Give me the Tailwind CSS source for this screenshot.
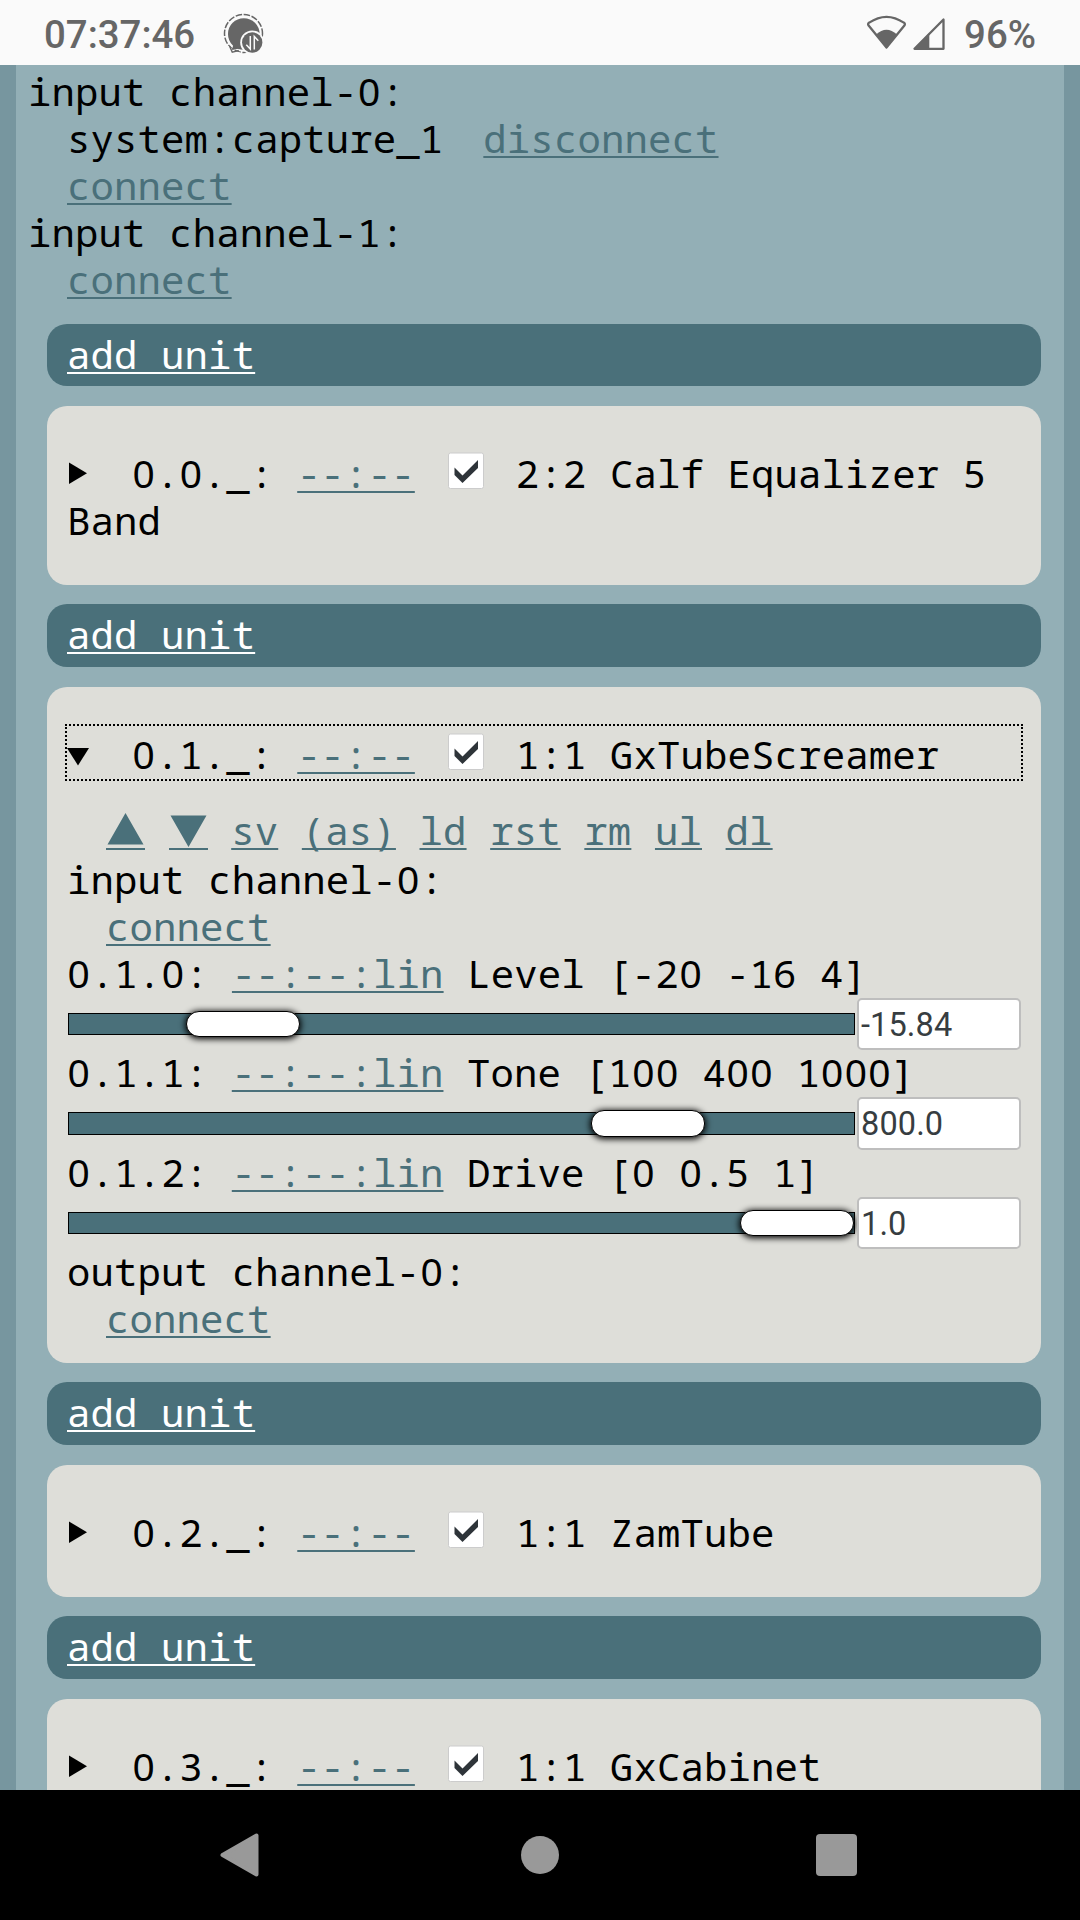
<!DOCTYPE html>
<html lang="en">
<head>
<meta charset="utf-8">
<title>Units</title>
<script src="https://cdn.jsdelivr.net/npm/@tailwindcss/browser@4"></script>
</head>
<body class="w-[1080px] h-[1920px] overflow-hidden flex flex-col bg-black [&_a]:text-[#4a707a] [&_a]:underline [&_a]:decoration-2 [&_a]:underline-offset-[3px] [&_a]:[text-decoration-skip-ink:none] [&_b]:font-normal [&_b]:font-['Noto_Sans'] [&_b]:mx-[0.62px]">

<!-- status bar -->
<header class="h-[65px] shrink-0 bg-[#fafafa] text-[#666] flex items-center pl-[44px] pr-[44px] font-['Roboto',sans-serif] font-medium text-[38.4px] leading-[65px]">
  <span class="pt-[4px]">07:37:46</span>
  <svg class="ml-[27px]" width="42" height="42" viewBox="223 11 42 42">
    <circle cx="244.5" cy="32.5" r="19" fill="none" stroke="#666" stroke-width="1.5" stroke-dasharray="6.5 1.6"/>
    <path d="M227 43L236 50L243 52V54H227Z" fill="#fafafa"/>
    <path d="M230.5 45l2.8 6.2 6.5-1.6" fill="none" stroke="#666" stroke-width="1.5"/>
    <path d="M235 41l-2 8 10-2z" fill="#666"/>
    <circle cx="244.8" cy="33" r="15.8" fill="#666"/>
    <circle cx="253.2" cy="41.5" r="12" fill="#fafafa"/>
    <circle cx="253.2" cy="41.5" r="10.2" fill="#666"/>
    <path d="M251.3 35v13l-4-4.2M255.3 48.500v-13l4 4.200" fill="none" stroke="#fafafa" stroke-width="1.5"/>
  </svg>
  <div class="flex-1"></div>
  <svg width="80" height="36" viewBox="866 15 80 36">
    <path d="M886.5 47.500L868.400 25.200Q867.600 23.600 869.200 22.600Q886.500 11 903.800 22.600Q905.400 23.600 904.600 25.200Z" fill="none" stroke="#666" stroke-width="2.300" stroke-linejoin="round"/>
    <path d="M886.500 48.500L876 34.500Q886.500 25 897 34.500Z" fill="#666"/>
    <path d="M943.500 19.500V48.800H914.500Z" fill="none" stroke="#666" stroke-width="2.300" stroke-linejoin="round"/>
    <path d="M929.300 33V49H914Z" fill="#666"/>
  </svg>
  <span class="ml-[18px] pt-[4px]">96%</span>
</header>

<!-- page -->
<main class="h-[1725px] shrink-0 overflow-hidden bg-[#93afb6] border-x-[16px] border-[#77969f] pt-[2px] font-['Noto_Sans_Mono','DejaVu_Sans_Mono',monospace] text-[39px] tracking-[0.12px] leading-[47px] text-black whitespace-nowrap">
  <div class="pl-[12px]">
    <p>input channel-<b>0</b>:</p>
    <p class="pl-[39px]">system:capture_1<a class="ml-[40px]">disconnect</a></p>
    <p class="pl-[39px]"><a>connect</a></p>
    <p>input channel-1:</p>
    <p class="pl-[39px]"><a>connect</a></p>
  </div>

  <div class="ml-[31px] mr-[23px] mt-[22px] flex flex-col">
    <div class="h-[62px] rounded-[20px] bg-[#4a707a] pl-[20px] pt-[6px]"><a class="!text-white">add unit</a></div>

    <section class="mt-[20px] h-[179px] rounded-[20px] bg-[#deded9] px-[18px] pt-[37px]">
      <div class="pl-[2px] pt-[6px]">
        <div class="flex">
          <svg class="w-[65px] h-[47px]" viewBox="0 0 65 47"><path d="M2 13.500V35L20 24.200Z"/></svg>
          <span><b>0</b>.<b>0</b>._:</span><a class="ml-[23.8px]">--:--</a>
          <svg class="ml-[33.5px] mt-[3px]" width="36" height="38" viewBox="0 0 36 38"><rect x=".5" y="1" width="35" height="35.500" rx="2" fill="#fff" stroke="#ccc"/><path d="M6.500 15.500L14.500 23.500L30 8V16L14.500 31L6.500 23Z" fill="#2e3439"/></svg>
          <span class="ml-[31.5px]">2:2 Calf Equalizer 5</span>
        </div>
        <div>Band</div>
      </div>
    </section>

    <div class="mt-[19px] h-[63px] rounded-[20px] bg-[#4a707a] pl-[20px] pt-[6px]"><a class="!text-white">add unit</a></div>

    <section class="mt-[20px] h-[676px] rounded-[20px] bg-[#deded9] px-[18px] pt-[37px]">
      <div class="h-[57px] border-2 border-dotted border-black flex pt-[4px]">
        <svg class="w-[65px] h-[47px]" viewBox="0 0 65 47"><path d="M0 18H22L11 35.500Z"/></svg>
        <span><b>0</b>.1._:</span><a class="ml-[24px]">--:--</a>
        <svg class="ml-[33.5px] mt-[3px]" width="36" height="38" viewBox="0 0 36 38"><rect x=".5" y="1" width="35" height="35.500" rx="2" fill="#fff" stroke="#ccc"/><path d="M6.500 15.500L14.500 23.500L30 8V16L14.500 31L6.500 23Z" fill="#2e3439"/></svg>
        <span class="ml-[31.5px]">1:1 GxTubeScreamer</span>
      </div>

      <div class="mt-[25px] h-[49px] pl-[41px] flex gap-[23.6px]">
        <svg width="39" height="47" viewBox="0 0 39 47" fill="#4a707a"><path d="M1.500 38.500L19.500 7L37.500 38.500ZM0 42H39V44H0Z"/></svg>
        <svg width="39" height="47" viewBox="0 0 39 47" fill="#4a707a"><path d="M1.500 9.500H37.500L19.500 41ZM0 42H39V44H0Z"/></svg>
        <a>sv</a><a>(as)</a><a>ld</a><a>rst</a><a>rm</a><a>ul</a><a>dl</a>
      </div>

      <div class="pl-[2px]">
        <p>input channel-<b>0</b>:</p>
        <p class="pl-[39px]"><a>connect</a></p>

        <p><b>0</b>.1.<b>0</b>: <a>--:--:lin</a> Level [-2<b>0</b> -16 4]</p>
        <div class="h-[52px] flex pl-px">
          <div class="mt-[17px] w-[787px] h-[22px] border border-black bg-[#4a707a] flex items-center">
            <div class="h-[26px] w-[114px] shrink-0 rounded-[13px] border border-black bg-white shadow-[0_1px_6px_1px_#000]" style="margin-left:117px"></div>
          </div>
          <div class="mt-[2px] ml-[2px] w-[164px] h-[52px] rounded-[5px] border-2 border-[#bebebe] bg-white pl-[2px] font-['Roboto',sans-serif] text-[32.500px] leading-[51px] text-[#373d41]">-15.84</div>
        </div>

        <p><b>0</b>.1.1: <a>--:--:lin</a> Tone [1<b>0</b><b>0</b> 4<b>0</b><b>0</b> 1<b>0</b><b>0</b><b>0</b>]</p>
        <div class="h-[53px] flex pl-px">
          <div class="mt-[17px] w-[787px] h-[23px] border border-black bg-[#4a707a] flex items-center">
            <div class="h-[27px] w-[114px] shrink-0 rounded-[13px] border border-black bg-white shadow-[0_1px_6px_1px_#000]" style="margin-left:522px"></div>
          </div>
          <div class="mt-[2px] ml-[2px] w-[164px] h-[53px] rounded-[5px] border-2 border-[#bebebe] bg-white pl-[2px] font-['Roboto',sans-serif] text-[32.500px] leading-[51px] text-[#373d41]">800.0</div>
        </div>

        <p><b>0</b>.1.2: <a>--:--:lin</a> Drive [<b>0</b> <b>0</b>.5 1]</p>
        <div class="h-[52px] flex pl-px">
          <div class="mt-[17px] w-[787px] h-[22px] border border-black bg-[#4a707a] flex items-center">
            <div class="h-[26px] w-[114px] shrink-0 rounded-[13px] border border-black bg-white shadow-[0_1px_6px_1px_#000]" style="margin-left:671px"></div>
          </div>
          <div class="mt-[2px] ml-[2px] w-[164px] h-[52px] rounded-[5px] border-2 border-[#bebebe] bg-white pl-[2px] relative font-['Roboto',sans-serif] text-[32.500px] leading-[51px] text-[#373d41]">1.0</div>
        </div>

        <p>output channel-<b>0</b>:</p>
        <p class="pl-[39px]"><a>connect</a></p>
      </div>
    </section>

    <div class="mt-[19px] h-[63px] rounded-[20px] bg-[#4a707a] pl-[20px] pt-[6px]"><a class="!text-white">add unit</a></div>

    <section class="mt-[20px] h-[132px] rounded-[20px] bg-[#deded9] px-[18px] pt-[37px]">
      <div class="pl-[2px] pt-[6px] flex">
        <svg class="w-[65px] h-[47px]" viewBox="0 0 65 47"><path d="M2 13.500V35L20 24.200Z"/></svg>
        <span><b>0</b>.2._:</span><a class="ml-[24px]">--:--</a>
        <svg class="ml-[33.5px] mt-[3px]" width="36" height="38" viewBox="0 0 36 38"><rect x=".5" y="1" width="35" height="35.500" rx="2" fill="#fff" stroke="#ccc"/><path d="M6.500 15.500L14.500 23.500L30 8V16L14.500 31L6.500 23Z" fill="#2e3439"/></svg>
        <span class="ml-[31.5px]">1:1 ZamTube</span>
      </div>
    </section>

    <div class="mt-[19px] h-[63px] rounded-[20px] bg-[#4a707a] pl-[20px] pt-[6px]"><a class="!text-white">add unit</a></div>

    <section class="mt-[20px] h-[132px] rounded-[20px] bg-[#deded9] px-[18px] pt-[37px]">
      <div class="pl-[2px] pt-[6px] flex">
        <svg class="w-[65px] h-[47px]" viewBox="0 0 65 47"><path d="M2 13.500V35L20 24.200Z"/></svg>
        <span><b>0</b>.3._:</span><a class="ml-[24px]">--:--</a>
        <svg class="ml-[33.5px] mt-[3px]" width="36" height="38" viewBox="0 0 36 38"><rect x=".5" y="1" width="35" height="35.500" rx="2" fill="#fff" stroke="#ccc"/><path d="M6.500 15.500L14.500 23.500L30 8V16L14.500 31L6.500 23Z" fill="#2e3439"/></svg>
        <span class="ml-[31.5px]">1:1 GxCabinet</span>
      </div>
    </section>
  </div>
</main>

<!-- navigation bar -->
<nav class="h-[130px] shrink-0 bg-black flex items-center pl-[220px] text-[#999]">
  <svg width="39" height="44" viewBox="0 0 39 44" fill="currentColor" stroke="currentColor" stroke-width="4" stroke-linejoin="round"><path d="M36.500 2.500V41.500L2.500 22Z"/></svg>
  <div class="ml-[262px] size-[38px] rounded-full bg-[#999]"></div>
  <div class="ml-[257px] w-[41px] h-[42px] rounded-[4px] bg-[#999]"></div>
</nav>
</body>
</html>
